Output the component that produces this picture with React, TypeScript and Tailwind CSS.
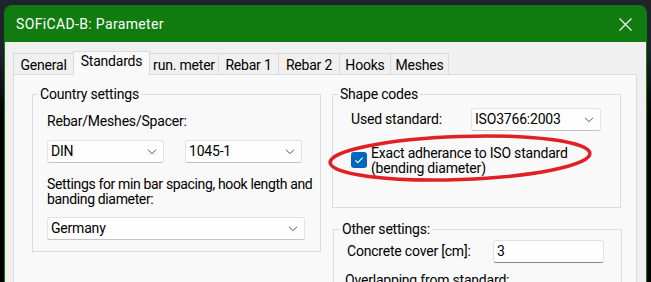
import React from "react";

function Chevron() {
  return (
    <svg width="10" height="6" viewBox="0 0 10 6" className="shrink-0">
      <path d="M1 0.8 L5 4.6 L9 0.8" fill="none" stroke="#5c5c5c" strokeWidth="1" />
    </svg>
  );
}

function Select({ value, className }: { value: string; className: string }) {
  return (
    <div
      className={
        "flex h-[23px] items-center justify-between rounded-[3px] border border-[#e2e2e2] border-b-[#c4c4c4] bg-[#fefefe] pl-[3px] pr-[6px] leading-[19px] " +
        className
      }
    >
      <span>{value}</span>
      <Chevron />
    </div>
  );
}

export default function App() {
  return (
    <div className="relative h-[282px] w-[651px] overflow-hidden bg-[linear-gradient(180deg,#1f232b_0px,#1f232b_50px,#000000_120px)] font-['Roboto','Liberation_Sans',sans-serif] text-[14px] tracking-[-0.2px] text-[#000000]">
      <div className="ml-[4px] mt-[5px] w-[643px] overflow-hidden rounded-t-[8px] border-x border-[#107c10]">
        {/* Title bar */}
        <div className="flex h-[37px] items-center justify-between bg-[#107c10] pl-[11px] pr-[14px] pt-[2px] text-white">
          <span className="leading-[19px] tracking-[0.35px]">SOFiCAD-B: Parameter</span>
          <svg width="13" height="13" viewBox="0 0 13 13">
            <path d="M0.5 0.5 L12.5 12.5 M12.5 0.5 L0.5 12.5" stroke="#ffffff" strokeWidth="1.1" fill="none" />
          </svg>
        </div>

        {/* Body */}
        <div className="h-[245px] bg-[#f0f0f0] pl-[8px] pt-[9px]">
          {/* Tabs */}
          <div className="relative z-10 flex h-[23px] items-end">
            <div className="flex h-[21px] w-[60px] justify-center border-l border-t border-[#d9d9d9] bg-[#f0f0f0] pt-[2px] leading-[19px]">General</div>
            <div className="-mb-px flex h-[24px] w-[77px] justify-center border-x border-t border-[#d9d9d9] bg-[#f9f9f9] leading-[19px]">Standards</div>
            <div className="flex h-[21px] w-[68px] justify-center border-t border-[#d9d9d9] bg-[#f0f0f0] pt-[2px] leading-[19px]">run. meter</div>
            <div className="flex h-[21px] w-[60px] justify-center border-l border-t border-[#d9d9d9] bg-[#f0f0f0] pt-[2px] leading-[19px]">Rebar 1</div>
            <div className="flex h-[21px] w-[61px] justify-center border-l border-t border-[#d9d9d9] bg-[#f0f0f0] pt-[2px] leading-[19px]">Rebar 2</div>
            <div className="flex h-[21px] w-[51px] justify-center border-l border-t border-[#d9d9d9] bg-[#f0f0f0] pt-[2px] leading-[19px]">Hooks</div>
            <div className="flex h-[21px] w-[59px] justify-center border-x border-t border-[#d9d9d9] bg-[#f0f0f0] pt-[2px] leading-[19px]">Meshes</div>
          </div>

          {/* Panel */}
          <div className="flex h-[230px] w-[624px] gap-[11px] border border-[#dcdcdc] bg-[#f9f9f9] pl-[18px] pt-[10px]">
            {/* Country settings */}
            <fieldset className="h-fit w-[289px] border border-[#dcdcdc] pb-[11px]">
              <legend className="ml-[5px] px-[2px] leading-[19px]">Country settings</legend>
              <div className="pl-[14px]">
                <p className="mt-[8px] leading-[19px]">Rebar/Meshes/Spacer:</p>
                <div className="mt-[9px] flex gap-[21px]">
                  <Select value="DIN" className="w-[117px]" />
                  <Select value="1045-1" className="w-[117px]" />
                </div>
                <p className="mt-[14px] leading-[15px] tracking-[-0.35px]">
                  Settings for min bar spacing, hook length and
                  <br />
                  banding diameter:
                </p>
                <Select value="Germany" className="mt-[10px] w-[258px]" />
              </div>
            </fieldset>

            {/* Right column */}
            <div className="flex flex-col">
              <fieldset className="w-[289px] border border-[#dcdcdc] pb-[31px]">
                <legend className="ml-[5px] px-[2px] leading-[19px]">Shape codes</legend>
                <div className="mt-[4px] flex items-center pl-[18px]">
                  <span className="w-[120px] leading-[19px]">Used standard:</span>
                  <Select value="ISO3766:2003" className="w-[130px]" />
                </div>
                <div className="mt-[15px] flex items-start pl-[18px]">
                  <div className="mt-[6px] flex size-[16px] shrink-0 items-center justify-center rounded-[3px] bg-[#0067c0]">
                    <svg width="16" height="16" viewBox="0 0 16 16">
                      <path d="M4.3 8.3 L6.8 10.7 L11.6 5.6" fill="none" stroke="#ffffff" strokeWidth="1.1" />
                    </svg>
                  </div>
                  <p className="ml-[4px] leading-[15px]">
                    Exact adherance to ISO standard
                    <br />
                    (bending diameter)
                  </p>
                </div>
              </fieldset>

              <fieldset className="ml-[1px] mt-[12px] w-[289px] border border-[#dcdcdc] pb-[20px]">
                <legend className="ml-[6px] px-[2px] leading-[19px]">Other settings:</legend>
                <div className="mt-[1px] flex items-center pl-[13px]">
                  <span className="w-[146px] leading-[19px]">Concrete cover [cm]:</span>
                  <div className="flex h-[23px] w-[111px] items-center rounded-[3px] border border-[#e2e2e2] border-b-[#868686] bg-[#fefefe] pl-[3px] leading-[19px]">
                    3
                  </div>
                </div>
                <p className="mt-[8px] pl-[11px] leading-[19px]">Overlapping from standard:</p>
              </fieldset>
            </div>
          </div>
        </div>
      </div>

      {/* Red annotation ellipse */}
      <svg className="pointer-events-none absolute left-0 top-0" width="651" height="282" viewBox="0 0 651 282">
        <ellipse cx="460" cy="158" rx="130" ry="21.5" fill="none" stroke="#e12025" strokeWidth="3.5" transform="rotate(-2 460 158)" />
      </svg>
    </div>
  );
}
